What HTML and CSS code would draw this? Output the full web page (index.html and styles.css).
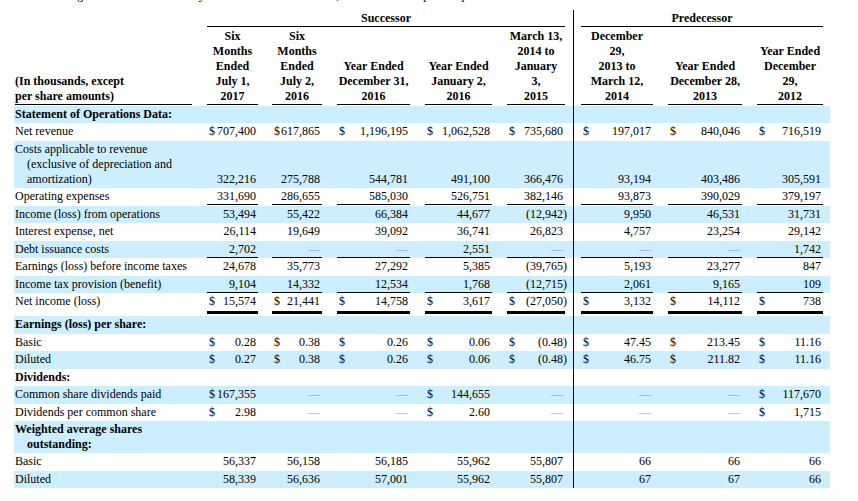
FILE: index.html
```html
<!DOCTYPE html>
<html>
<head>
<meta charset="utf-8">
<link rel="stylesheet" href="styles.css">
</head>
<body>
<div class="page">
<p class="intro">The following table sets forth summary consolidated financial data, as of and for the periods presented.</p>
<table class="fin">
<colgroup>
<col class="w0"><col class="w1"><col class="w2"><col class="w3"><col class="w4"><col class="w5"><col class="w6"><col class="w7"><col class="w8">
</colgroup>
<tr class="top">
<td></td>
<td class="succ" colspan="5"><div class="grp">Successor</div></td>
<td class="pred" colspan="3"><div class="grp">Predecessor</div></td>
</tr>
<tr class="hdr">
<td><div class="hl">(In thousands, except<br>per share amounts)</div></td>
<td><div class="hd">Six<br>Months<br>Ended<br>July 1,<br>2017</div></td>
<td><div class="hd">Six<br>Months<br>Ended<br>July 2,<br>2016</div></td>
<td><div class="hd">Year Ended<br>December 31,<br>2016</div></td>
<td><div class="hd">Year Ended<br>January 2,<br>2016</div></td>
<td><div class="hd">March 13,<br>2014 to<br>January<br>3,<br>2015</div></td>
<td><div class="hd">December<br>29,<br>2013 to<br>March 12,<br>2014</div></td>
<td><div class="hd">Year Ended<br>December 28,<br>2013</div></td>
<td><div class="hd">Year Ended<br>December<br>29,<br>2012</div></td>
</tr>
<tr class="s">
<td><div class="l b">Statement of Operations Data:</div></td>
<td></td><td></td><td></td><td></td><td></td><td></td><td></td><td></td>
</tr>
<tr>
<td><div class="l">Net revenue</div></td>
<td><div class="v"><span class="d">$</span><span>707,400</span></div></td>
<td><div class="v"><span class="d">$</span><span>617,865</span></div></td>
<td><div class="v"><span class="d">$</span><span>1,196,195</span></div></td>
<td><div class="v"><span class="d">$</span><span>1,062,528</span></div></td>
<td><div class="v"><span class="d">$</span><span>735,680</span></div></td>
<td><div class="v"><span class="d">$</span><span>197,017</span></div></td>
<td><div class="v"><span class="d">$</span><span>840,046</span></div></td>
<td><div class="v"><span class="d">$</span><span>716,519</span></div></td>
</tr>
<tr class="s">
<td><div class="l">Costs applicable to revenue<br>(exclusive of depreciation and<br>amortization)</div></td>
<td><div class="v"><span>322,216</span></div></td>
<td><div class="v"><span>275,788</span></div></td>
<td><div class="v"><span>544,781</span></div></td>
<td><div class="v"><span>491,100</span></div></td>
<td><div class="v"><span>366,476</span></div></td>
<td><div class="v"><span>93,194</span></div></td>
<td><div class="v"><span>403,486</span></div></td>
<td><div class="v"><span>305,591</span></div></td>
</tr>
<tr>
<td><div class="l">Operating expenses</div></td>
<td><div class="v u"><span>331,690</span></div></td>
<td><div class="v u"><span>286,655</span></div></td>
<td><div class="v u"><span>585,030</span></div></td>
<td><div class="v u"><span>526,751</span></div></td>
<td><div class="v u"><span>382,146</span></div></td>
<td><div class="v u"><span>93,873</span></div></td>
<td><div class="v u"><span>390,029</span></div></td>
<td><div class="v u"><span>379,197</span></div></td>
</tr>
<tr class="s">
<td><div class="l">Income (loss) from operations</div></td>
<td><div class="v"><span>53,494</span></div></td>
<td><div class="v"><span>55,422</span></div></td>
<td><div class="v"><span>66,384</span></div></td>
<td><div class="v"><span>44,677</span></div></td>
<td><div class="v"><span>(12,942<span class="cp">)</span></span></div></td>
<td><div class="v"><span>9,950</span></div></td>
<td><div class="v"><span>46,531</span></div></td>
<td><div class="v"><span>31,731</span></div></td>
</tr>
<tr>
<td><div class="l">Interest expense, net</div></td>
<td><div class="v"><span>26,114</span></div></td>
<td><div class="v"><span>19,649</span></div></td>
<td><div class="v"><span>39,092</span></div></td>
<td><div class="v"><span>36,741</span></div></td>
<td><div class="v"><span>26,823</span></div></td>
<td><div class="v"><span>4,757</span></div></td>
<td><div class="v"><span>23,254</span></div></td>
<td><div class="v"><span>29,142</span></div></td>
</tr>
<tr class="s">
<td><div class="l">Debt issuance costs</div></td>
<td><div class="v u"><span>2,702</span></div></td>
<td><div class="v u"><span class="dash">—</span></div></td>
<td><div class="v u"><span class="dash">—</span></div></td>
<td><div class="v u"><span>2,551</span></div></td>
<td><div class="v u"><span class="dash">—</span></div></td>
<td><div class="v u"><span class="dash">—</span></div></td>
<td><div class="v u"><span class="dash">—</span></div></td>
<td><div class="v u"><span>1,742</span></div></td>
</tr>
<tr>
<td><div class="l">Earnings (loss) before income taxes</div></td>
<td><div class="v"><span>24,678</span></div></td>
<td><div class="v"><span>35,773</span></div></td>
<td><div class="v"><span>27,292</span></div></td>
<td><div class="v"><span>5,385</span></div></td>
<td><div class="v"><span>(39,765<span class="cp">)</span></span></div></td>
<td><div class="v"><span>5,193</span></div></td>
<td><div class="v"><span>23,277</span></div></td>
<td><div class="v"><span>847</span></div></td>
</tr>
<tr class="s">
<td><div class="l">Income tax provision (benefit)</div></td>
<td><div class="v u"><span>9,104</span></div></td>
<td><div class="v u"><span>14,332</span></div></td>
<td><div class="v u"><span>12,534</span></div></td>
<td><div class="v u"><span>1,768</span></div></td>
<td><div class="v u"><span>(12,715<span class="cp">)</span></span></div></td>
<td><div class="v u"><span>2,061</span></div></td>
<td><div class="v u"><span>9,165</span></div></td>
<td><div class="v u"><span>109</span></div></td>
</tr>
<tr class="ni">
<td><div class="l">Net income (loss)</div></td>
<td><div class="v dd"><span class="d">$</span><span>15,574</span></div></td>
<td><div class="v dd"><span class="d">$</span><span>21,441</span></div></td>
<td><div class="v dd"><span class="d">$</span><span>14,758</span></div></td>
<td><div class="v dd"><span class="d">$</span><span>3,617</span></div></td>
<td><div class="v dd"><span class="d">$</span><span>(27,050<span class="cp">)</span></span></div></td>
<td><div class="v dd"><span class="d">$</span><span>3,132</span></div></td>
<td><div class="v dd"><span class="d">$</span><span>14,112</span></div></td>
<td><div class="v dd"><span class="d">$</span><span>738</span></div></td>
</tr>
<tr class="s">
<td><div class="l b">Earnings (loss) per share:</div></td>
<td></td><td></td><td></td><td></td><td></td><td></td><td></td><td></td>
</tr>
<tr>
<td><div class="l">Basic</div></td>
<td><div class="v"><span class="d">$</span><span>0.28</span></div></td>
<td><div class="v"><span class="d">$</span><span>0.38</span></div></td>
<td><div class="v"><span class="d">$</span><span>0.26</span></div></td>
<td><div class="v"><span class="d">$</span><span>0.06</span></div></td>
<td><div class="v"><span class="d">$</span><span>(0.48<span class="cp">)</span></span></div></td>
<td><div class="v"><span class="d">$</span><span>47.45</span></div></td>
<td><div class="v"><span class="d">$</span><span>213.45</span></div></td>
<td><div class="v"><span class="d">$</span><span>11.16</span></div></td>
</tr>
<tr class="s">
<td><div class="l">Diluted</div></td>
<td><div class="v"><span class="d">$</span><span>0.27</span></div></td>
<td><div class="v"><span class="d">$</span><span>0.38</span></div></td>
<td><div class="v"><span class="d">$</span><span>0.26</span></div></td>
<td><div class="v"><span class="d">$</span><span>0.06</span></div></td>
<td><div class="v"><span class="d">$</span><span>(0.48<span class="cp">)</span></span></div></td>
<td><div class="v"><span class="d">$</span><span>46.75</span></div></td>
<td><div class="v"><span class="d">$</span><span>211.82</span></div></td>
<td><div class="v"><span class="d">$</span><span>11.16</span></div></td>
</tr>
<tr>
<td><div class="l b">Dividends:</div></td>
<td></td><td></td><td></td><td></td><td></td><td></td><td></td><td></td>
</tr>
<tr class="s">
<td><div class="l">Common share dividends paid</div></td>
<td><div class="v"><span class="d">$</span><span>167,355</span></div></td>
<td><div class="v"><span class="dash">—</span></div></td>
<td><div class="v"><span class="dash">—</span></div></td>
<td><div class="v"><span class="d">$</span><span>144,655</span></div></td>
<td><div class="v"><span class="dash">—</span></div></td>
<td><div class="v"><span class="dash">—</span></div></td>
<td><div class="v"><span class="dash">—</span></div></td>
<td><div class="v"><span class="d">$</span><span>117,670</span></div></td>
</tr>
<tr>
<td><div class="l">Dividends per common share</div></td>
<td><div class="v"><span class="d">$</span><span>2.98</span></div></td>
<td><div class="v"><span class="dash">—</span></div></td>
<td><div class="v"><span class="dash">—</span></div></td>
<td><div class="v"><span class="d">$</span><span>2.60</span></div></td>
<td><div class="v"><span class="dash">—</span></div></td>
<td><div class="v"><span class="dash">—</span></div></td>
<td><div class="v"><span class="dash">—</span></div></td>
<td><div class="v"><span class="d">$</span><span>1,715</span></div></td>
</tr>
<tr class="s">
<td><div class="l b">Weighted average shares<br>outstanding:</div></td>
<td></td><td></td><td></td><td></td><td></td><td></td><td></td><td></td>
</tr>
<tr>
<td><div class="l">Basic</div></td>
<td><div class="v"><span>56,337</span></div></td>
<td><div class="v"><span>56,158</span></div></td>
<td><div class="v"><span>56,185</span></div></td>
<td><div class="v"><span>55,962</span></div></td>
<td><div class="v"><span>55,807</span></div></td>
<td><div class="v"><span>66</span></div></td>
<td><div class="v"><span>66</span></div></td>
<td><div class="v"><span>66</span></div></td>
</tr>
<tr class="s">
<td><div class="l">Diluted</div></td>
<td><div class="v"><span>58,339</span></div></td>
<td><div class="v"><span>56,636</span></div></td>
<td><div class="v"><span>57,001</span></div></td>
<td><div class="v"><span>55,962</span></div></td>
<td><div class="v"><span>55,807</span></div></td>
<td><div class="v"><span>67</span></div></td>
<td><div class="v"><span>67</span></div></td>
<td><div class="v"><span>66</span></div></td>
</tr>
</table>
</div>
</body>
</html>
```

FILE: styles.css
```css
* { box-sizing: border-box; }
html, body { margin: 0; padding: 0; background: #fff; }
body {
  font-family: "Liberation Serif", "Times New Roman", serif;
  font-size: 12px;
  color: #000;
}
.page { padding-left: 14px; height: 501px; overflow: hidden; }
.intro {
  margin: -12px 0 0 1px;
  height: 15px;
  line-height: 15px;
  white-space: nowrap;
}
.fin {
  border-collapse: separate;
  border-spacing: 0;
  table-layout: fixed;
  width: 816px;
  margin-top: 7px;
}
.w0 { width: 186px; }
.w1 { width: 65px; }
.w2 { width: 65px; }
.w3 { width: 87px; }
.w4 { width: 83px; }
.w5 { width: 73px; }
.w6 { width: 87px; }
.w7 { width: 89px; }
.w8 { width: 81px; }

.fin td {
  padding-top: 1px;
  padding-bottom: 0.45px;
  vertical-align: bottom;
  line-height: 15px;
}
.fin td:nth-child(1) { padding-left: 1px; padding-right: 8px; vertical-align: top; }
.fin td:nth-child(2) { padding-left: 7px; padding-right: 7px; }
.fin td:nth-child(3) { padding-left: 7px; padding-right: 8px; }
.fin td:nth-child(4) { padding-left: 7px; padding-right: 7px; }
.fin td:nth-child(5) { padding-left: 8px; padding-right: 8px; }
.fin td:nth-child(6) { padding-left: 7px; padding-right: 8px; }
.fin td:nth-child(7) { padding-left: 7px; padding-right: 7px; border-left: 1px solid #000; }
.fin td:nth-child(8) { padding-left: 8px; padding-right: 7px; }
.fin td:nth-child(9) { padding-left: 8px; padding-right: 7px; }

.fin tr.s td { background: #cceeff; }

/* group header row */
.fin tr.top td { padding-top: 1px; padding-bottom: 0; }
.fin tr.top td.succ { padding-left: 7px; padding-right: 8px; border-left: 0; }
.fin tr.top td.pred { padding-left: 7px; padding-right: 7px; border-left: 1px solid #000; }
.grp {
  font-weight: bold;
  text-align: center;
  border-bottom: 1px solid #000;
}

/* column header row */
.fin tr.hdr td { padding-top: 1.5px; padding-bottom: 1.5px; vertical-align: bottom; }
.hd, .hl {
  font-weight: bold;
  border-bottom: 1px solid #000;
}
.hd { text-align: center; }
.hl { text-align: left; }

/* labels */
.l {
  padding-left: 12px;
  text-indent: -12px;
  border-bottom: 1px solid transparent;
}
.b { font-weight: bold; }

/* values */
.v {
  display: flex;
  justify-content: flex-end;
  padding: 0 2px;
  border-bottom: 1px solid transparent;
  white-space: nowrap;
}
.v.u { border-bottom-color: #000; }
.v.dd {
  padding-bottom: 2px;
  border-bottom: 3px solid #000;
  margin-bottom: 2px;
}
.d { margin-right: auto; }
.cp { margin-right: -4px; }
.dash { color: #9a9a9a; }
```
